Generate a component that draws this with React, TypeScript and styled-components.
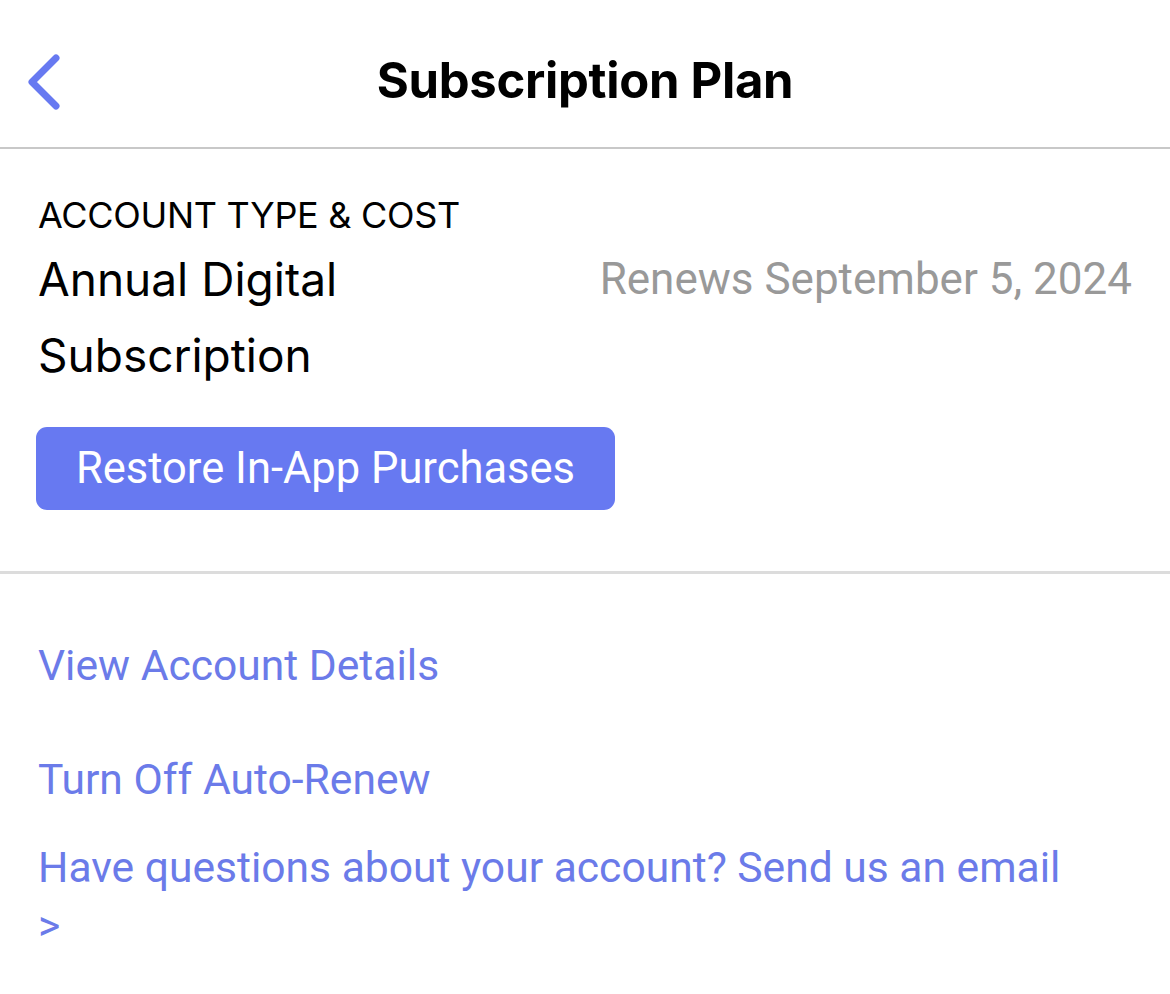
import React from "react";
import styled, { createGlobalStyle } from "styled-components";

const Global = createGlobalStyle`
  html, body { margin: 0; padding: 0; background: #ffffff; }
  body { font-family: Inter, "Noto Sans", sans-serif; -webkit-font-smoothing: antialiased; }
`;

const Page = styled.div`
  width: 1170px;
  min-height: 994px;
  background: #fff;
  display: flex;
  flex-direction: column;
`;

const NavBar = styled.header`
  height: 149px;
  border-bottom: 2px solid #c8c8c8;
  display: grid;
  grid-template-columns: 120px 1fr 120px;
  align-items: center;
  box-sizing: border-box;
`;

const BackButton = styled.button`
  background: none;
  border: none;
  padding: 16px 0 0 24px;
  height: 86px;
  display: flex;
  align-items: center;
  cursor: pointer;
`;

const Title = styled.h1`
  margin: 0;
  text-align: center;
  font-size: 49px;
  font-weight: 700;
  color: #000;
  letter-spacing: -0.3px;
  padding-top: 14px;
`;

const Section = styled.section`
  padding: 0 38px 61px 38px;
  border-bottom: 3px solid #dcdcdc;
`;

const Overline = styled.div`
  font-size: 36px;
  font-weight: 400;
  color: #000;
  letter-spacing: -0.3px;
  padding-top: 44px;
  line-height: 44px;
`;

const PlanRow = styled.div`
  display: flex;
  justify-content: space-between;
  align-items: flex-start;
  margin-top: 4px;
`;

const PlanName = styled.div`
  font-size: 46px;
  line-height: 76px;
  color: #000;
  width: 330px;
`;

const RenewText = styled.div`
  font-size: 44px;
  line-height: 76px;
  color: #999999;
  font-family: Roboto, Inter, sans-serif;
`;

const PrimaryButton = styled.button`
  margin-top: 34px;
  width: 579px;
  height: 83px;
  border: none;
  border-radius: 11px;
  background: #6779f1;
  color: #fff;
  font-family: Roboto, Inter, sans-serif;
  font-size: 43.5px;
  padding: 0;
  cursor: pointer;
  margin-left: -2px;
`;

const Links = styled.nav`
  padding: 62px 90px 0 38px;
  display: flex;
  flex-direction: column;
`;

const LinkItem = styled.a<{ $gap?: number }>`
  display: block;
  color: #6b7be9;
  font-family: Roboto, Inter, sans-serif;
  font-size: 42.6px;
  line-height: 58px;
  text-decoration: none;
  margin-bottom: ${(p) => p.$gap ?? 0}px;
`;

const Chevron = () => (
  <svg width="40" height="60" viewBox="0 0 40 60" fill="none">
    <path
      d="M32 6 L8 30 L32 54"
      stroke="#6779f1"
      strokeWidth="7"
      strokeLinecap="round"
      strokeLinejoin="round"
    />
  </svg>
);

export default function App() {
  return (
    <Page>
      <Global />
      <NavBar>
        <BackButton aria-label="Back">
          <Chevron />
        </BackButton>
        <Title>Subscription Plan</Title>
        <div />
      </NavBar>
      <Section>
        <Overline>ACCOUNT TYPE &amp; COST</Overline>
        <PlanRow>
          <PlanName>Annual Digital Subscription</PlanName>
          <RenewText>Renews September 5, 2024</RenewText>
        </PlanRow>
        <PrimaryButton>Restore In-App Purchases</PrimaryButton>
      </Section>
      <Links>
        <LinkItem href="#" $gap={56}>View Account Details</LinkItem>
        <LinkItem href="#" $gap={30}>Turn Off Auto-Renew</LinkItem>
        <LinkItem href="#">Have questions about your account? Send us an email &gt;</LinkItem>
      </Links>
    </Page>
  );
}
